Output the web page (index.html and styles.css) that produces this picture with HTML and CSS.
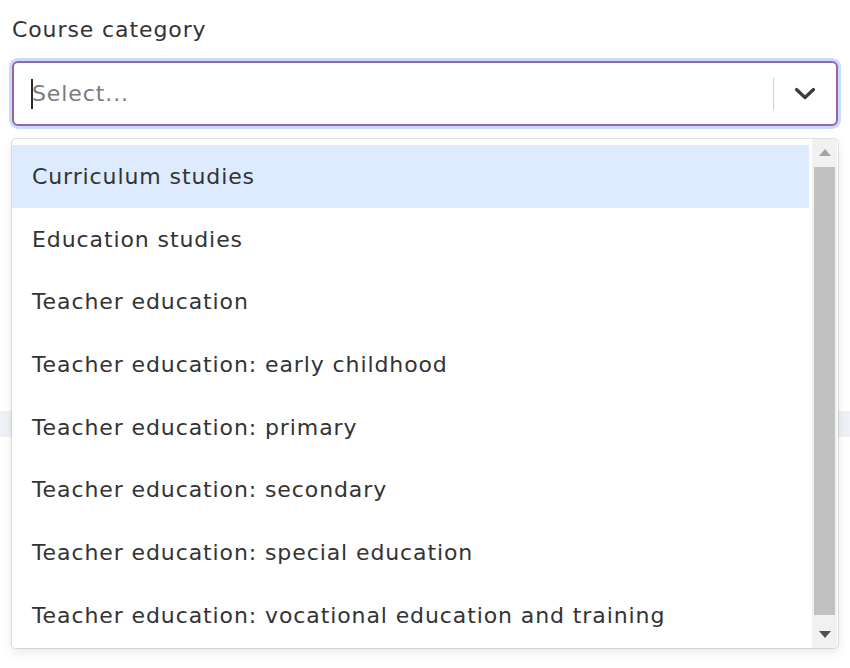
FILE: index.html
```html
<!DOCTYPE html>
<html lang="en">
<head>
<meta charset="utf-8">
<title>Course category</title>
<link rel="stylesheet" href="styles.css">
</head>
<body>
<div class="page">
  <label class="label">Course category</label>
  <div class="select">
    <div class="control">
      <div class="value"><span class="caret"></span><span class="placeholder">Select...</span></div>
      <div class="indicators">
        <span class="sep"></span>
        <span class="chev">
          <svg width="22" height="14" viewBox="0 0 22 14"><path d="M2.5 2.5 L11 10.5 L19.5 2.5" fill="none" stroke="#3a3a3a" stroke-width="3.2" stroke-linecap="round" stroke-linejoin="round"/></svg>
        </span>
      </div>
    </div>
    <div class="menu">
      <div class="list">
        <div class="option focused">Curriculum studies</div>
        <div class="option">Education studies</div>
        <div class="option">Teacher education</div>
        <div class="option">Teacher education: early childhood</div>
        <div class="option">Teacher education: primary</div>
        <div class="option">Teacher education: secondary</div>
        <div class="option">Teacher education: special education</div>
        <div class="option">Teacher education: vocational education and training</div>
      </div>
      <div class="scrollbar">
        <div class="sb-btn">
          <svg width="12" height="7" viewBox="0 0 12 7"><path d="M0 7 L6 0 L12 7 Z" fill="#a3a3a3"/></svg>
        </div>
        <div class="sb-track"><div class="thumb"></div></div>
        <div class="sb-btn">
          <svg width="12" height="7" viewBox="0 0 12 7"><path d="M0 0 L6 7 L12 0 Z" fill="#505050"/></svg>
        </div>
      </div>
    </div>
  </div>
  <div class="behind">
    <div class="band"></div>
  </div>
</div>
</body>
</html>
```
FILE: styles.css
```css
* { box-sizing: border-box; }
html, body { margin: 0; padding: 0; background: #fff; }
body {
  font-family: "DejaVu Sans", "Liberation Sans", sans-serif;
  font-size: 22px;
  letter-spacing: 0.9px;
  color: #333;
  width: 850px;
  height: 668px;
  overflow: hidden;
}
.page {
  padding: 15px 12px 0 12px;
}
.label {
  display: block;
  line-height: 30px;
  margin-bottom: 16px;
  color: #333;
}
.select {
  position: relative;
  width: 826px;
  z-index: 2;
}
.control {
  display: flex;
  align-items: center;
  height: 65px;
  border: 2px solid #9a63a6;
  border-radius: 6px;
  box-shadow: 0 0 0 3px #c6dcfb;
  background: #fff;
}
.value {
  flex: 1;
  display: flex;
  align-items: center;
  padding-left: 16px;
}
.caret {
  display: inline-block;
  width: 2px;
  height: 30px;
  background: #2a2a2a;
  margin-right: -1px;
  margin-left: 1px;
}
.placeholder {
  color: #7b7b7b;
}
.indicators {
  display: flex;
  align-items: center;
  height: 100%;
}
.sep {
  width: 1px;
  height: 32px;
  background: #cfcfcf;
}
.chev {
  width: 62px;
  display: flex;
  justify-content: center;
  align-items: center;
  padding-top: 1px;
}
.chev svg { display: block; }
.menu {
  position: absolute;
  top: calc(100% + 13px);
  left: 0;
  right: 0;
  height: 509px;
  background: #fff;
  border-radius: 4px;
  box-shadow: 0 0 0 1px rgba(0,0,0,0.1), 0 4px 11px rgba(0,0,0,0.1);
  display: flex;
  overflow: hidden;
}
.list {
  flex: 1;
  padding-top: 6px;
  overflow: hidden;
}
.option {
  height: 62.7px;
  display: flex;
  align-items: center;
  padding-left: 20px;
  color: #333;
  white-space: nowrap;
}
.option.focused {
  background: #deebff;
  margin-right: 3px;
}
.scrollbar {
  width: 25px;
  margin-right: 1px;
  display: flex;
  flex-direction: column;
  background: #f1f1f1;
}
.sb-btn {
  height: 27px;
  display: flex;
  align-items: center;
  justify-content: center;
}
.sb-track {
  flex: 1;
  padding: 1px 2px 6px 2px;
  display: flex;
}
.thumb {
  flex: 1;
  background: #c1c1c1;
}
.behind {
  position: relative;
  z-index: 1;
  margin: 0 -12px;
  padding-top: 285px;
}
.band {
  height: 26px;
  background: #eef2f7;
}
```
